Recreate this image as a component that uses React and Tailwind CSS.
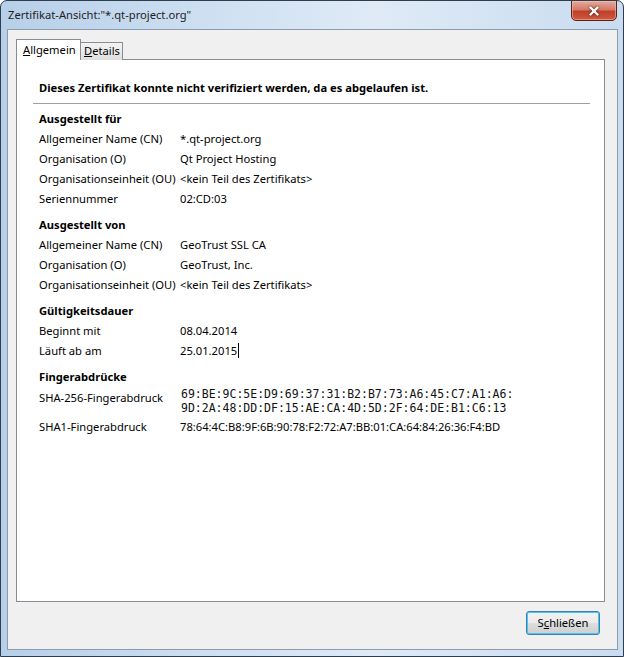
import { X } from 'lucide-react';

const font = { fontFamily: '"Noto Sans", "Liberation Sans", sans-serif' };

function Row({ label, value }) {
  return (
    <div className="flex h-[20px] items-center whitespace-nowrap">
      <div className="w-[141px] shrink-0">{label}</div>
      <div>{value}</div>
    </div>
  );
}

function Section({ title, children }) {
  return (
    <div className="mt-[6px]">
      <div className="h-[20px] flex items-center font-bold">{title}</div>
      {children}
    </div>
  );
}

export default function App() {
  return (
    <div
      className="relative w-[624px] h-[657px] overflow-hidden rounded-t-[7px] border border-[#2f3e4f] bg-[linear-gradient(90deg,#b7cfe8_0%,#cfe0f2_35%,#dfeaf6_60%,#c9dcf0_100%)] text-[11.2px] text-black"
      style={font}
    >
      {/* title bar */}
      <div className="flex h-[28px] items-center pl-[7px]">
        <span className="text-[11.2px] text-[#1e1e1e]">Zertifikat-Ansicht:"*.qt-project.org"</span>
      </div>

      {/* close button */}
      <div className="absolute right-[6px] top-[-1px] flex h-[21px] w-[46px] items-center justify-center rounded-b-[5px] border border-[#5a2118] bg-[linear-gradient(180deg,#e6aa9c_0%,#d47a68_45%,#c0402c_55%,#cf5a3f_100%)] shadow-[inset_0_0_0_1px_rgba(255,200,190,0.5)]">
        <X size={14} strokeWidth={4} className="text-white drop-shadow-[0_0_1px_#3a1008]" />
      </div>

      {/* client area */}
      <div className="absolute left-[6px] right-[5px] top-[28px] bottom-[6px] border border-[#8c9bae] bg-[#f0f0f0]">
        <div className="ml-[8px] mr-[12px] mt-[9px]">
          {/* tabs */}
          <div className="relative z-10 flex h-[21px] items-end">
            <div className="flex h-[21px] w-[65px] items-start border border-b-0 border-[#898c95] bg-white pl-[6px] pt-[2px]">
              <span><span className="underline">A</span>llgemein</span>
            </div>
            <div className="-ml-px flex h-[18px] w-[43px] items-start border border-b-0 border-[#898c95] bg-[linear-gradient(180deg,#f2f2f2_0%,#ebebeb_50%,#dddddd_100%)] pl-[3px]">
              <span><span className="underline">D</span>etails</span>
            </div>
          </div>

          {/* tab panel */}
          <div className="-mt-px h-[543px] border border-[#898c95] bg-white">
            <div className="pl-[16px] pr-[14px] pt-[18px]">
              <div className="flex h-[20px] items-center whitespace-nowrap pl-[6px] font-bold">
                Dieses Zertifikat konnte nicht verifiziert werden, da es abgelaufen ist.
              </div>
              <div className="mt-[5px] h-px bg-[#a0a0a0]" />
              <div className="mt-[-1px] pl-[6px]">
                <Section title="Ausgestellt für">
                  <Row label="Allgemeiner Name (CN)" value="*.qt-project.org" />
                  <Row label="Organisation (O)" value="Qt Project Hosting" />
                  <Row label="Organisationseinheit (OU)" value="<kein Teil des Zertifikats>" />
                  <Row label="Seriennummer" value="02:CD:03" />
                </Section>
                <Section title="Ausgestellt von">
                  <Row label="Allgemeiner Name (CN)" value="GeoTrust SSL CA" />
                  <Row label="Organisation (O)" value="GeoTrust, Inc." />
                  <Row label="Organisationseinheit (OU)" value="<kein Teil des Zertifikats>" />
                </Section>
                <Section title="Gültigkeitsdauer">
                  <Row label="Beginnt mit" value="08.04.2014" />
                  <div className="flex h-[20px] items-center">
                    <div className="w-[141px] shrink-0">Läuft ab am</div>
                    <div className="flex items-center">
                      25.01.2015
                      <span className="ml-px inline-block h-[15px] w-px bg-black" />
                    </div>
                  </div>
                </Section>
                <Section title="Fingerabdrücke">
                  <div className="mt-px flex">
                    <div className="h-[20px] w-[142px] shrink-0 leading-[20px]">SHA-256-Fingerabdruck</div>
                    <div
                      className="-mt-px text-[11.5px] leading-[14px] text-[#111]"
                      style={{ fontFamily: '"DejaVu Sans Mono", "Liberation Mono", monospace' }}
                    >
                      <div>69:BE:9C:5E:D9:69:37:31:B2:B7:73:A6:45:C7:A1:A6:</div>
                      <div>9D:2A:48:DD:DF:15:AE:CA:4D:5D:2F:64:DE:B1:C6:13</div>
                    </div>
                  </div>
                  <div className="mt-[2px] flex h-[20px] items-center whitespace-nowrap">
                    <div className="w-[141px] shrink-0">SHA1-Fingerabdruck</div>
                    <div>78:64:4C:B8:9F:6B:90:78:F2:72:A7:BB:01:CA:64:84:26:36:F4:BD</div>
                  </div>
                </Section>
              </div>
            </div>
          </div>

          {/* buttons */}
          <div className="mt-[9px] flex justify-end pr-[5px]">
            <button className="flex h-[24px] w-[74px] items-center justify-center rounded-[3px] border border-[#3c7fb1] bg-[linear-gradient(180deg,#f2f2f2_0%,#ebebeb_48%,#dddddd_52%,#cfcfcf_100%)] shadow-[inset_0_0_0_1px_#48c6f0]">
              <span>S<span className="underline">c</span>hließen</span>
            </button>
          </div>
        </div>
      </div>
    </div>
  );
}
